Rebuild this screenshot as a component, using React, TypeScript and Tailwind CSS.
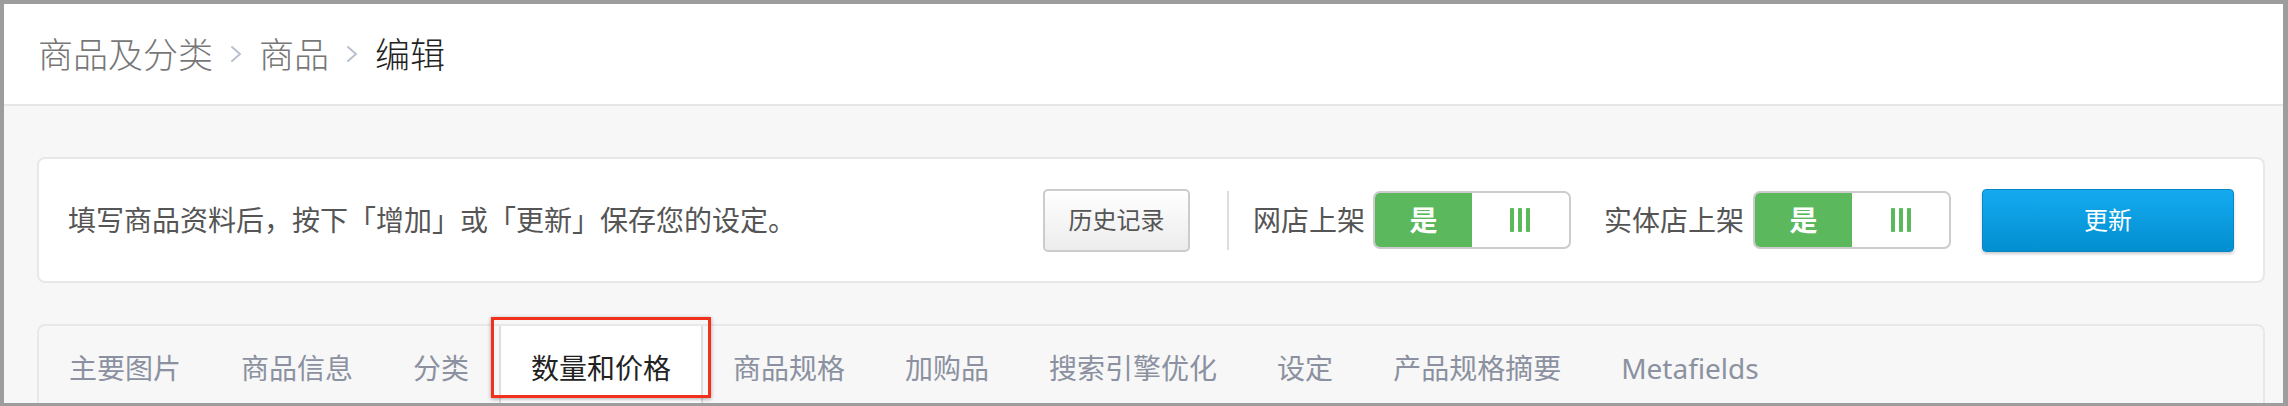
import type { ReactNode } from 'react';

const font = "font-['Noto_Sans','Noto_Sans_CJK_SC',sans-serif]";

const tabs = [
  '主要图片',
  '商品信息',
  '分类',
  '数量和价格',
  '商品规格',
  '加购品',
  '搜索引擎优化',
  '设定',
  '产品规格摘要',
  'Metafields',
];

function Chevron() {
  return (
    <svg width="14" height="18" viewBox="0 0 14 18" className="mx-[16px] shrink-0">
      <polyline
        points="3,2 11,9 3,16"
        fill="none"
        stroke="#b8c0cf"
        strokeWidth="2"
        strokeLinejoin="round"
        strokeLinecap="round"
      />
    </svg>
  );
}

function YesNoToggle() {
  return (
    <div className="flex h-[58px] w-[198px] overflow-hidden rounded-[7px] border-2 border-[#cccccc] bg-white">
      <div className="flex w-1/2 items-center justify-center bg-[#5cb85c] text-[28px] font-bold text-white">
        是
      </div>
      <div className="flex w-1/2 items-center justify-center gap-[4px]">
        <span className="h-[24px] w-[4px] rounded-[1px] bg-[#5cb85c]" />
        <span className="h-[24px] w-[4px] rounded-[1px] bg-[#5cb85c]" />
        <span className="h-[24px] w-[4px] rounded-[1px] bg-[#5cb85c]" />
      </div>
    </div>
  );
}

function Label({ children }: { children: ReactNode }) {
  return <span className="whitespace-nowrap text-[28px] text-[#555555]">{children}</span>;
}

export default function App() {
  const activeTab = 3;

  return (
    <div
      className={`${font} flex h-[406px] w-[2288px] flex-col overflow-hidden border-t-4 border-r-[5px] border-b-[3px] border-l-4 border-[#9d9d9d] bg-[#f7f7f7]`}
    >
      {/* breadcrumb header */}
      <div className="flex h-[102px] shrink-0 items-center border-b-2 border-[#e6e6e6] bg-white pl-[34px] text-[35px] font-light leading-none">
        <span className="text-[#777777]">商品及分类</span>
        <Chevron />
        <span className="text-[#777777]">商品</span>
        <Chevron />
        <span className="text-[#222222]">编辑</span>
      </div>

      <div className="flex flex-col pt-[51px] pr-[18px] pl-[33px]">
        {/* action card */}
        <div className="flex h-[126px] items-center justify-between rounded-[8px] border-2 border-[#e8e8e8] bg-white pr-[29px] pl-[29px]">
          <span className="text-[28px] text-[#555555]">
            填写商品资料后，按下「增加」或「更新」保存您的设定。
          </span>
          <div className="flex items-center">
            <button className="h-[63px] w-[147px] rounded-[5px] border-2 border-[#cccccc] bg-linear-to-b from-white to-[#ececec] text-[24px] text-[#555555]">
              历史记录
            </button>
            <div className="ml-[37px] h-[59px] w-[2px] bg-[#dddddd]" />
            <div className="ml-[24px]">
              <Label>网店上架</Label>
            </div>
            <div className="ml-[8px]">
              <YesNoToggle />
            </div>
            <div className="ml-[33px]">
              <Label>实体店上架</Label>
            </div>
            <div className="ml-[9px]">
              <YesNoToggle />
            </div>
            <button className="ml-[31px] h-[63px] w-[252px] rounded-[4px] border border-[#0b86c5] bg-linear-to-b from-[#14aaf0] to-[#028fd0] text-[24px] text-white shadow-[0_2px_3px_rgba(0,0,0,0.2)]">
              更新
            </button>
          </div>
        </div>

        {/* tab bar */}
        <div className="mt-[41px] flex h-[100px] rounded-t-[8px] border-2 border-b-0 border-[#e8e8e8] bg-[#f7f7f7]">
          {tabs.map((tab, i) =>
            i === activeTab ? (
              <div
                key={tab}
                className="relative h-full border-x-2 border-[#dddddd] bg-white px-[30px] pt-[21px] text-[28px] leading-[42px] whitespace-nowrap text-[#222222]"
              >
                {tab}
                <div className="absolute -top-[9px] -right-[10px] -left-[10px] h-[81px] border-[3px] border-[#f2301b] shadow-[0_1px_4px_rgba(0,0,0,0.35)]" />
              </div>
            ) : (
              <div
                key={tab}
                className="h-full px-[30px] pt-[21px] text-[28px] leading-[42px] whitespace-nowrap text-[#8b91a0]"
              >
                {tab}
              </div>
            ),
          )}
        </div>
      </div>
    </div>
  );
}
